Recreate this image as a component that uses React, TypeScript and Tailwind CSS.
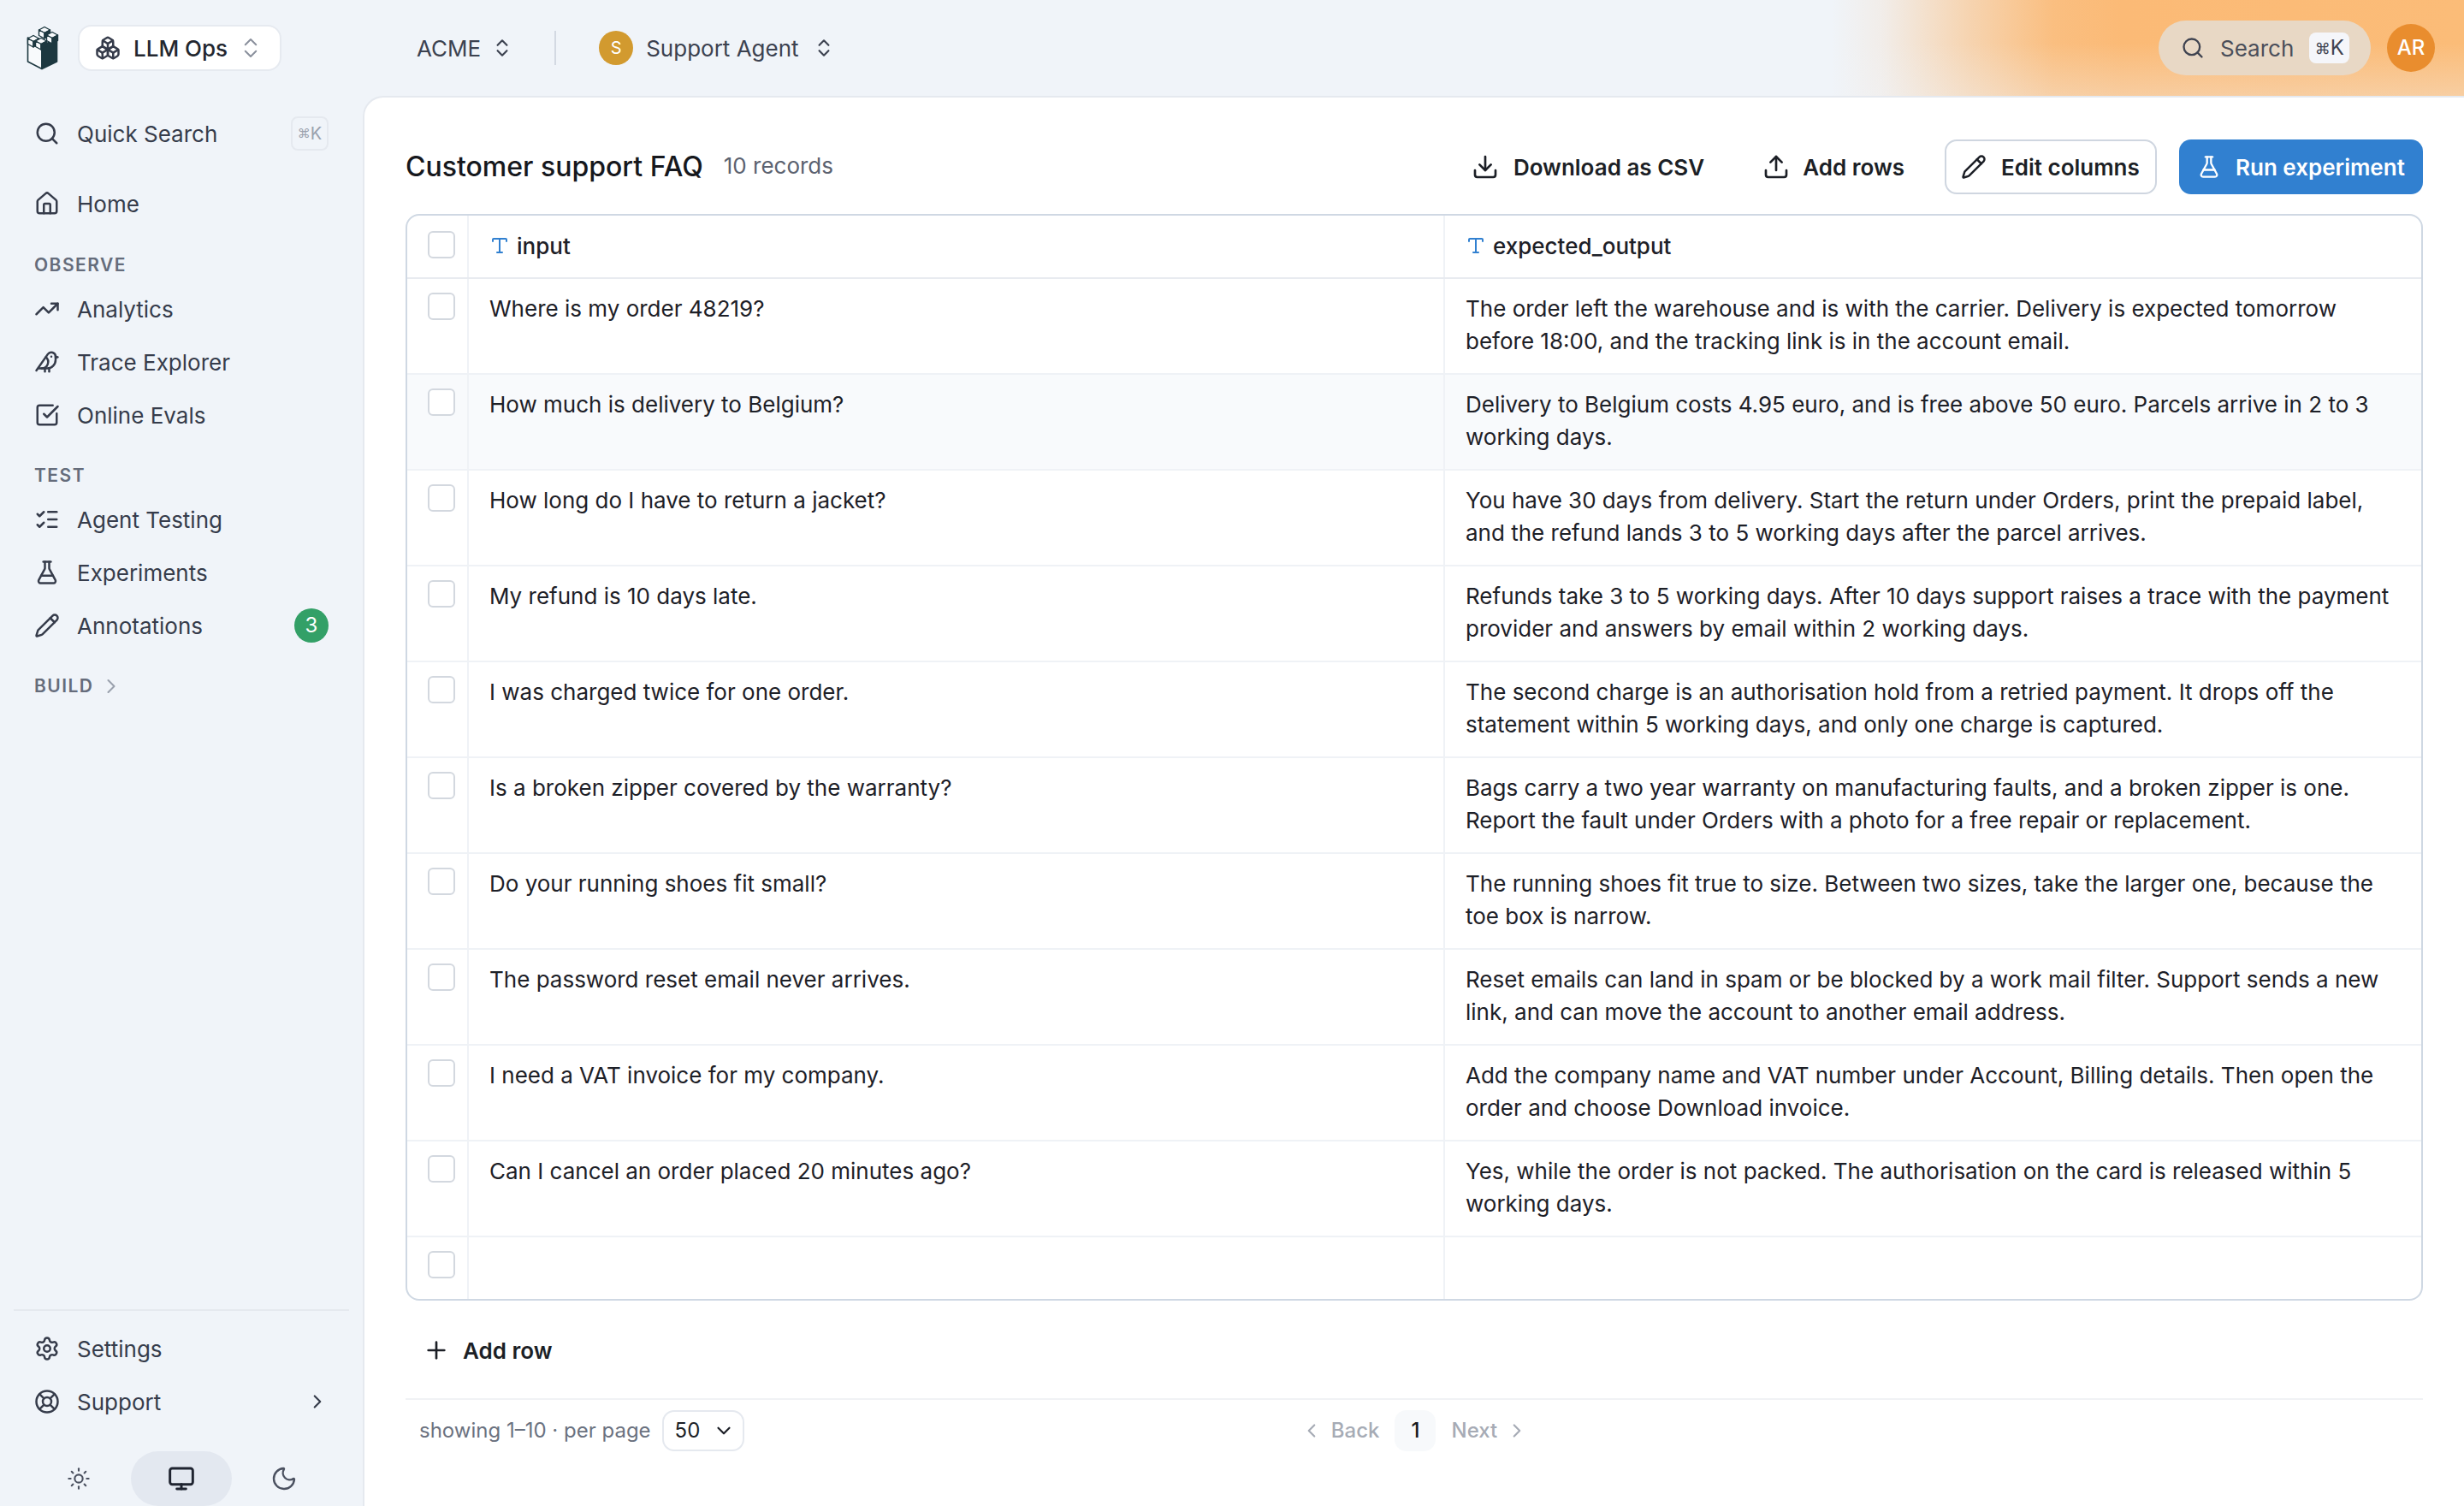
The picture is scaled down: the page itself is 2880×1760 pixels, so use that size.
import React from 'react';
import {
  Bird,
  Boxes,
  ChevronDown,
  ChevronLeft,
  ChevronRight,
  ChevronsUpDown,
  Download,
  FlaskConical,
  House,
  LifeBuoy,
  ListChecks,
  Monitor,
  Moon,
  Pencil,
  Plus,
  Search,
  Settings,
  SquareCheckBig,
  Sun,
  TrendingUp,
  Type,
  Upload,
} from 'lucide-react';

const rows = [
  ['Where is my order 48219?', 'The order left the warehouse and is with the carrier. Delivery is expected tomorrow before 18:00, and the tracking link is in the account email.'],
  ['How much is delivery to Belgium?', 'Delivery to Belgium costs 4.95 euro, and is free above 50 euro. Parcels arrive in 2 to 3 working days.'],
  ['How long do I have to return a jacket?', 'You have 30 days from delivery. Start the return under Orders, print the prepaid label, and the refund lands 3 to 5 working days after the parcel arrives.'],
  ['My refund is 10 days late.', 'Refunds take 3 to 5 working days. After 10 days support raises a trace with the payment provider and answers by email within 2 working days.'],
  ['I was charged twice for one order.', 'The second charge is an authorisation hold from a retried payment. It drops off the statement within 5 working days, and only one charge is captured.'],
  ['Is a broken zipper covered by the warranty?', 'Bags carry a two year warranty on manufacturing faults, and a broken zipper is one. Report the fault under Orders with a photo for a free repair or replacement.'],
  ['Do your running shoes fit small?', 'The running shoes fit true to size. Between two sizes, take the larger one, because the toe box is narrow.'],
  ['The password reset email never arrives.', 'Reset emails can land in spam or be blocked by a work mail filter. Support sends a new link, and can move the account to another email address.'],
  ['I need a VAT invoice for my company.', 'Add the company name and VAT number under Account, Billing details. Then open the order and choose Download invoice.'],
  ['Can I cancel an order placed 20 minutes ago?', 'Yes, while the order is not packed. The authorisation on the card is released within 5 working days.'],
];

const Logo = () => {
  const cube = (x: number, y: number) => (
    <g stroke="#1d3840" strokeWidth="1.4" strokeLinejoin="round">
      <path d={`M${x} ${y - 4.5}L${x + 6.5} ${y - 1}L${x} ${y + 2.5}L${x - 6.5} ${y - 1}Z`} fill="#f8fafc" />
      <path d={`M${x - 6.5} ${y - 1}L${x} ${y + 2.5}V${y + 9}L${x - 6.5} ${y + 5.5}Z`} fill="#f8fafc" />
      <path d={`M${x + 6.5} ${y - 1}L${x} ${y + 2.5}V${y + 9}L${x + 6.5} ${y + 5.5}Z`} fill="#1d3840" />
    </g>
  );
  return (
    <svg viewBox="12 10 38 52" className="w-[38px] h-[52px] shrink-0">
      <path d="M13.5 24V52L30 60.5V34Z" fill="#f8fafc" stroke="#1d3840" strokeWidth="1.6" strokeLinejoin="round" />
      <path d="M30 34V60.5L47.5 52V24Z" fill="#1d3840" stroke="#1d3840" strokeWidth="1.6" strokeLinejoin="round" />
      {cube(33, 16)}
      {cube(42, 22)}
      {cube(20, 26)}
      {cube(29, 29)}
    </svg>
  );
};

const NavItem = ({ icon: Icon, label, badge }: { icon: React.ElementType; label: string; badge?: string }) => (
  <div className="flex items-center h-[62px] pl-[40px] pr-[40px] text-[#363c4b]">
    <Icon className="w-[30px] h-[30px] shrink-0" strokeWidth={2} />
    <span className="ml-[20px] text-[26px] flex-1">{label}</span>
    {badge && (
      <span className="w-[40px] h-[40px] rounded-full bg-[#33a067] text-white text-[24px] flex items-center justify-center">
        {badge}
      </span>
    )}
  </div>
);

const SectionLabel = ({ children }: { children: React.ReactNode }) => (
  <div className="flex items-center h-[40px] pl-[40px] text-[21px] font-semibold tracking-[0.07em] text-[#656c7b]">
    {children}
  </div>
);

const Checkbox = () => <div className="w-[32px] h-[32px] rounded-[6px] border-2 border-[#d3d8df] bg-white" />;

export default function App() {
  return (
    <div className="w-[2880px] h-[1760px] relative overflow-hidden flex flex-col bg-[#f0f4f9] font-[Inter,sans-serif]">
      <div className="absolute top-0 right-0 w-[740px] h-[112px] bg-[linear-gradient(to_bottom,rgba(240,244,249,0)_45%,rgba(240,244,249,0.32)),linear-gradient(to_right,rgba(251,186,118,0),rgba(251,186,118,0.12)_60px,rgba(251,186,118,0.55)_160px,rgba(251,186,118,0.92)_260px,#fbba76_340px,#fbbc78)]" />

      <header className="relative h-[112px] shrink-0 flex items-center pl-[31px] pr-[34px]">
        <Logo />
        <div className="ml-[22px] w-[238px] h-[54px] rounded-[16px] bg-white border-2 border-[#e6eaf0] flex items-center pl-[18px]">
          <Boxes className="w-[30px] h-[30px] text-[#363c4b]" strokeWidth={2} />
          <span className="ml-[15px] text-[26px] font-medium text-[#23272f]">LLM Ops</span>
          <ChevronsUpDown className="ml-[12px] w-[30px] h-[30px] text-[#8a909c]" strokeWidth={1.6} />
        </div>
        <span className="ml-[158px] text-[26px] text-[#3c4250]">ACME</span>
        <ChevronsUpDown className="ml-[12px] w-[26px] h-[26px] text-[#3c4250]" strokeWidth={2} />
        <div className="ml-[48px] w-[2px] h-[40px] bg-[#d3d9e2]" />
        <div className="ml-[50px] w-[40px] h-[40px] rounded-full bg-[#d29a2f] text-white text-[20px] flex items-center justify-center">
          S
        </div>
        <span className="ml-[15px] text-[26px] text-[#3c4250]">Support Agent</span>
        <ChevronsUpDown className="ml-[16px] w-[26px] h-[26px] text-[#3c4250]" strokeWidth={2} />
        <div className="ml-auto w-[248px] h-[64px] rounded-full bg-[#e8d8c5] flex items-center pl-[26px]">
          <Search className="w-[28px] h-[28px] text-[#3f4350]" strokeWidth={2} />
          <span className="ml-[18px] text-[26px] text-[#4b4f5a]">Search</span>
          <span className="ml-[18px] w-[47px] h-[36px] rounded-[8px] bg-[#f5f6fa] text-[#3f4350] flex items-center justify-center">
            <span className="text-[18px]">⌘</span>
            <span className="text-[24px]">K</span>
          </span>
        </div>
        <div className="ml-[19px] w-[56px] h-[56px] rounded-full bg-[#e98d2e] text-white text-[24px] font-medium flex items-center justify-center">
          AR
        </div>
      </header>

      <div className="relative flex-1 flex min-h-0">
        <aside className="w-[424px] shrink-0 flex flex-col">
          <div className="mt-[13px] flex items-center h-[62px] pl-[40px] pr-[40px] text-[#363c4b]">
            <Search className="w-[30px] h-[30px]" strokeWidth={2} />
            <span className="ml-[20px] text-[26px] flex-1">Quick Search</span>
            <span className="w-[44px] h-[40px] rounded-[8px] border-2 border-[#e5e9ef] text-[#9aa1ad] flex items-center justify-center">
              <span className="text-[15px]">⌘</span>
              <span className="text-[20px]">K</span>
            </span>
          </div>
          <div className="mt-[20px]">
            <NavItem icon={House} label="Home" />
          </div>
          <div className="mt-[21px]">
            <SectionLabel>OBSERVE</SectionLabel>
          </div>
          <NavItem icon={TrendingUp} label="Analytics" />
          <NavItem icon={Bird} label="Trace Explorer" />
          <NavItem icon={SquareCheckBig} label="Online Evals" />
          <div className="mt-[20px]">
            <SectionLabel>TEST</SectionLabel>
          </div>
          <NavItem icon={ListChecks} label="Agent Testing" />
          <NavItem icon={FlaskConical} label="Experiments" />
          <NavItem icon={Pencil} label="Annotations" badge="3" />
          <div className="mt-[20px] flex items-center">
            <SectionLabel>BUILD</SectionLabel>
            <ChevronRight className="ml-[6px] w-[28px] h-[28px] text-[#9aa1ad]" strokeWidth={1.8} />
          </div>

          <div className="mt-auto mx-[16px] h-[2px] bg-[#e5e9ef]" />
          <div className="mt-[13px]">
            <NavItem icon={Settings} label="Settings" />
          </div>
          <div className="flex items-center h-[62px] pl-[40px] pr-[40px] text-[#363c4b]">
            <LifeBuoy className="w-[30px] h-[30px]" strokeWidth={2} />
            <span className="ml-[20px] text-[26px] flex-1">Support</span>
            <ChevronRight className="w-[26px] h-[26px]" strokeWidth={2} />
          </div>
          <div className="mt-[27px] h-[64px] pl-[33px] flex gap-[2px] text-[#4b5160]">
            <div className="w-[118px] flex items-center justify-center">
              <Sun className="w-[28px] h-[28px]" strokeWidth={1.8} />
            </div>
            <div className="w-[118px] rounded-full bg-[#e3e8f0] flex items-center justify-center">
              <Monitor className="w-[32px] h-[32px] text-[#1f2430]" strokeWidth={2.2} />
            </div>
            <div className="w-[118px] flex items-center justify-center">
              <Moon className="w-[32px] h-[32px]" strokeWidth={1.8} />
            </div>
          </div>
        </aside>

        <main className="flex-1 min-w-0 bg-white rounded-tl-[24px] border-l-2 border-t-2 border-[#e5e9ef] pl-[48px] pr-[48px] flex flex-col">
          <div className="h-[136px] pt-[26px] shrink-0 flex items-center">
            <h1 className="text-[32px] font-medium text-[#16181d]">Customer support FAQ</h1>
            <span className="ml-[24px] mb-[3px] text-[26px] text-[#5b6270]">10 records</span>
            <button className="ml-auto flex items-center text-[26px] font-semibold text-[#1c1f26]">
              <Download className="w-[32px] h-[32px]" strokeWidth={2} />
              <span className="ml-[17px]">Download as CSV</span>
            </button>
            <button className="ml-[68px] flex items-center text-[26px] font-semibold text-[#1c1f26]">
              <Upload className="w-[32px] h-[32px]" strokeWidth={2} />
              <span className="ml-[15px]">Add rows</span>
            </button>
            <button className="ml-[47px] w-[248px] h-[64px] rounded-[14px] border-2 border-[#cfd6e0] flex items-center pl-[17px] text-[26px] font-semibold text-[#1c1f26]">
              <Pencil className="w-[30px] h-[30px]" strokeWidth={2} />
              <span className="ml-[17px]">Edit columns</span>
            </button>
            <button className="ml-[26px] w-[285px] h-[64px] rounded-[14px] bg-[#3180d0] flex items-center pl-[21px] text-[26px] font-semibold text-white">
              <FlaskConical className="w-[28px] h-[28px]" strokeWidth={2} />
              <span className="ml-[17px]">Run experiment</span>
            </button>
          </div>

          <div className="rounded-[16px] border-2 border-[#cfd8e3] overflow-hidden text-[26px] text-[#1d2027]">
            <div className="h-[74px] flex border-b-2 border-[#e8ebf0]">
              <div className="w-[72px] shrink-0 border-r-2 border-[#eff2f6] pl-[24px] pt-[18px]">
                <Checkbox />
              </div>
              <div className="w-[1141px] shrink-0 border-r-2 border-[#eff2f6] flex items-center pl-[24px] pb-[2px]">
                <Type className="w-[24px] h-[24px] text-[#3180d0]" strokeWidth={2} />
                <span className="ml-[8px] font-medium">input</span>
              </div>
              <div className="flex-1 flex items-center pl-[24px] pb-[2px]">
                <Type className="w-[24px] h-[24px] text-[#3180d0]" strokeWidth={2} />
                <span className="ml-[8px] font-medium">expected_output</span>
              </div>
            </div>
            {rows.map(([q, a], i) => (
              <div key={q} className={`h-[112px] flex border-b-2 border-[#eff2f6] ${i === 1 ? 'bg-[#f8fafc]' : ''}`}>
                <div className="w-[72px] shrink-0 border-r-2 border-[#eff2f6] pl-[24px] pt-[16px]">
                  <Checkbox />
                </div>
                <div className="w-[1141px] shrink-0 border-r-2 border-[#eff2f6] pl-[24px] pt-[16px] leading-[38px]">{q}</div>
                <div className="flex-1 pl-[24px] pr-[24px] pt-[16px] leading-[38px]">{a}</div>
              </div>
            ))}
            <div className="h-[72px] flex">
              <div className="w-[72px] shrink-0 border-r-2 border-[#eff2f6] pl-[24px] pt-[16px]">
                <Checkbox />
              </div>
              <div className="w-[1141px] shrink-0 border-r-2 border-[#eff2f6]" />
              <div className="flex-1" />
            </div>
          </div>

          <div className="h-[116px] shrink-0 flex items-center pl-[20px] pt-[2px] border-b-2 border-[#f0f2f5] text-[#1c1f26]">
            <Plus className="w-[32px] h-[32px]" strokeWidth={2} />
            <span className="ml-[15px] text-[26px] font-semibold">Add row</span>
          </div>

          <div className="mt-[12px] h-[48px] shrink-0 grid grid-cols-[1fr_auto_1fr] items-center px-[16px]">
            <div className="flex items-center text-[24px] text-[#6b7280]">
              <span>showing 1–10 · per page</span>
              <div className="ml-[13px] w-[96px] h-[48px] rounded-[14px] border-2 border-[#e5e9ef] flex items-center pl-[13px] text-[#1c1f26]">
                <span>50</span>
                <ChevronDown className="ml-[15px] w-[26px] h-[26px]" strokeWidth={2} />
              </div>
            </div>
            <div className="flex items-center text-[24px] font-medium text-[#a6abb5]">
              <ChevronLeft className="w-[26px] h-[26px]" strokeWidth={2} />
              <span className="ml-[10px]">Back</span>
              <span className="ml-[18px] w-[48px] h-[48px] rounded-[14px] bg-[#f7f9fb] text-[#16181d] flex items-center justify-center">1</span>
              <span className="ml-[18px]">Next</span>
              <ChevronRight className="ml-[10px] w-[26px] h-[26px]" strokeWidth={2} />
            </div>
            <div />
          </div>
        </main>
      </div>
    </div>
  );
}
